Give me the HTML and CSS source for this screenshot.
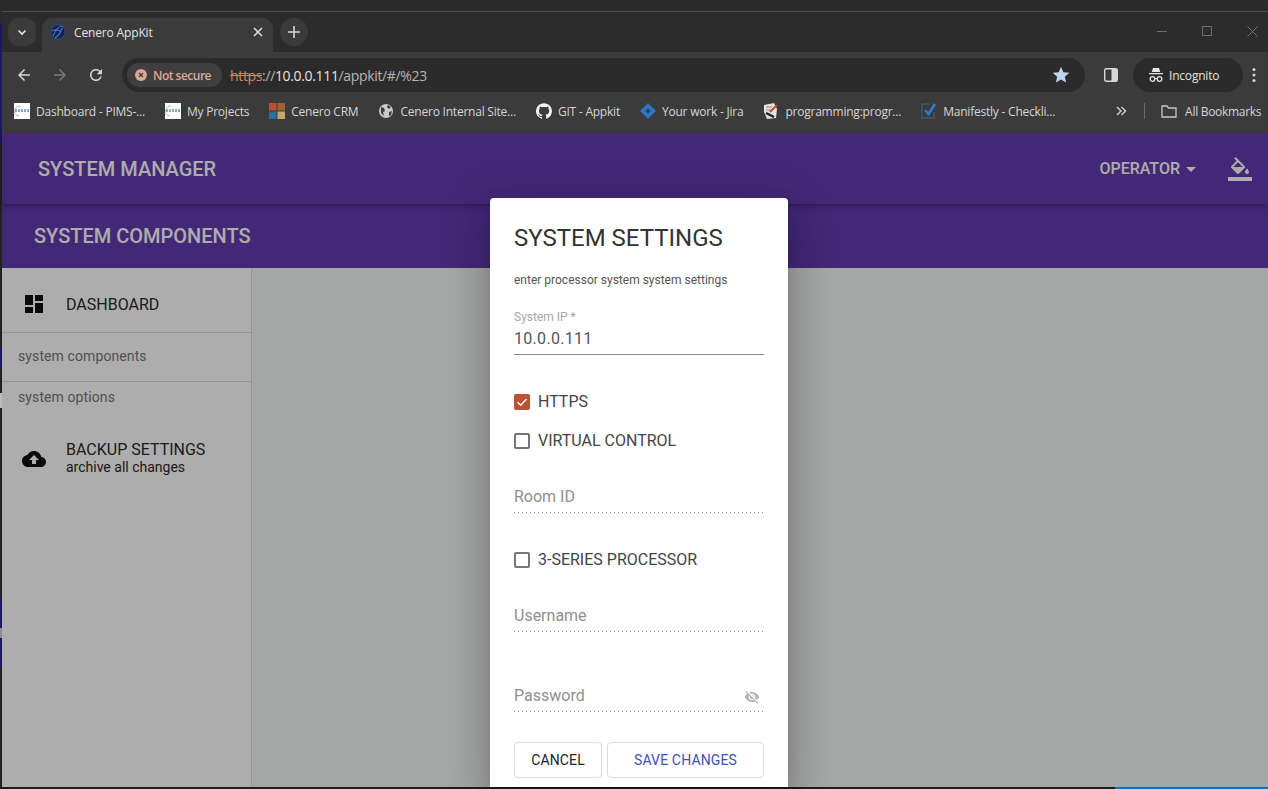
FILE: index.html
```html
<!DOCTYPE html>
<html>
<head>
  <title>Cenero AppKit</title>
  <link rel="stylesheet" href="styles.css">
</head>
<body>
  <div class="desk-top"></div>
  <div class="desk">
    <div class="edge"></div>
    <div class="window">

      <!-- tab strip -->
      <div class="tabstrip">
        <div class="round-btn list-btn">
          <svg viewBox="0 0 12 12" width="12" height="12"><path d="M2.5 4.5 6 8l3.5-3.5" fill="none" stroke="#e3e3e3" stroke-width="1.6"/></svg>
        </div>
        <div class="tab">
          <svg class="tab-icon" viewBox="0 0 16 16" width="16" height="16">
            <circle cx="8" cy="8" r="7.2" fill="#14224a" stroke="#2c4c9c" stroke-width="1"/>
            <path d="M3 12C6 5 10 2 13 2M5 14c3-2 6-6 7-10M2 7c3-2 7-1 9 1" fill="none" stroke="#4d74c8" stroke-width="1.2"/>
          </svg>
          <span class="tab-title">Cenero AppKit</span>
          <svg viewBox="0 0 10 10" width="10" height="10"><path d="M1 1l8 8M9 1 1 9" stroke="#e3e3e3" stroke-width="1.5"/></svg>
        </div>
        <div class="round-btn plus-btn">
          <svg viewBox="0 0 12 12" width="12" height="12"><path d="M6 0v12M0 6h12" stroke="#d8d8d8" stroke-width="1.6"/></svg>
        </div>
        <div class="win-controls">
          <svg viewBox="0 0 10 10" width="10" height="10"><path d="M0 5.5h10" stroke="#6f6f6f"/></svg>
          <svg viewBox="0 0 10 10" width="10" height="10"><path d="M.5.5h9v9h-9z" fill="none" stroke="#6f6f6f"/></svg>
          <svg viewBox="0 0 11 11" width="11" height="11"><path d="M.5.5l10 10M10.5.5l-10 10" stroke="#6f6f6f"/></svg>
        </div>
      </div>

      <!-- address bar -->
      <div class="toolbar">
        <svg class="nav-icon" viewBox="0 0 24 24" width="18" height="18"><path fill="#d6d6d6" d="M20 11H7.83l5.59-5.59L12 4l-8 8 8 8 1.41-1.41L7.83 13H20v-2z"/></svg>
        <svg class="nav-icon" viewBox="0 0 24 24" width="18" height="18"><path fill="#7b7b7b" d="M4 11h12.17l-5.59-5.59L12 4l8 8-8 8-1.41-1.41L16.17 13H4v-2z"/></svg>
        <svg class="nav-icon" viewBox="0 0 24 24" width="18" height="18"><path fill="#d6d6d6" d="M17.65 6.35C16.2 4.9 14.21 4 12 4c-4.42 0-7.99 3.58-7.99 8s3.57 8 7.99 8c3.73 0 6.84-2.55 7.73-6h-2.08c-.82 2.33-3.04 4-5.65 4-3.31 0-6-2.69-6-6s2.69-6 6-6c1.66 0 3.14.69 4.22 1.78L13 11h7V4l-2.35 2.35z"/></svg>
        <div class="omnibox">
          <div class="not-secure">
            <svg viewBox="0 0 12 12" width="12" height="12"><circle cx="6" cy="6" r="6" fill="#d9a796"/><path d="M4 4l4 4M8 4 4 8" stroke="#4a3a34" stroke-width="1.2"/></svg>
            <span>Not secure</span>
          </div>
          <div class="url"><s class="url-scheme">https</s><span class="url-dim">://</span>10.0.0.111<span class="url-dim">/appkit/#/%23</span></div>
          <svg class="star" viewBox="0 0 24 24" width="20" height="20"><path fill="#c2d3f2" d="M12 17.27L18.18 21l-1.64-7.03L22 9.24l-7.19-.61L12 2 9.19 8.63 2 9.24l5.46 4.73L5.82 21z"/></svg>
        </div>
        <svg class="panel-icon" viewBox="0 0 14 14" width="14" height="14"><rect x=".7" y=".7" width="12.6" height="12.6" rx="1.5" fill="none" stroke="#d8d8d8" stroke-width="1.4"/><rect x="7.5" y="1" width="5.5" height="12" fill="#d8d8d8"/></svg>
        <div class="incognito">
          <svg viewBox="0 0 16 16" width="16" height="16">
            <path fill="#e3e3e3" d="M5 1h6l1.3 4H3.7zM1 6h14v1.3H1z"/>
            <circle cx="4.5" cy="12" r="2.3" fill="none" stroke="#e3e3e3" stroke-width="1.3"/>
            <circle cx="11.5" cy="12" r="2.3" fill="none" stroke="#e3e3e3" stroke-width="1.3"/>
            <path d="M6.8 11.5h2.4" stroke="#e3e3e3"/>
          </svg>
          <span>Incognito</span>
        </div>
        <svg class="menu-dots" viewBox="0 0 4 16" width="4" height="16"><circle cx="2" cy="2.5" r="1.5" fill="#d8d8d8"/><circle cx="2" cy="8" r="1.5" fill="#d8d8d8"/><circle cx="2" cy="13.5" r="1.5" fill="#d8d8d8"/></svg>
      </div>

      <!-- bookmarks -->
      <div class="bookmarks">
        <a class="bm">
          <svg viewBox="0 0 16 16" width="16" height="16"><rect width="16" height="16" fill="#fff"/><path d="M1 7.5h14" stroke="#8aa8d0" stroke-width="3" stroke-dasharray="2 1"/><path d="M5 13a5 5 0 0 1 1-10" fill="none" stroke="#b5b5a8"/></svg>
          <span>Dashboard - PIMS-...</span>
        </a>
        <a class="bm">
          <svg viewBox="0 0 16 16" width="16" height="16"><rect width="16" height="16" fill="#fff"/><path d="M1 7.5h14" stroke="#8aa8d0" stroke-width="3" stroke-dasharray="2 1"/><path d="M5 13a5 5 0 0 1 1-10" fill="none" stroke="#b5b5a8"/></svg>
          <span>My Projects</span>
        </a>
        <a class="bm">
          <svg viewBox="0 0 16 16" width="16" height="16"><rect width="7.5" height="7.5" fill="#b94f32"/><rect x="8.5" width="7.5" height="7.5" fill="#a0622e"/><rect y="8.5" width="7.5" height="7.5" fill="#2a6ea8"/><rect x="8.5" y="8.5" width="7.5" height="7.5" fill="#c9a66b"/></svg>
          <span>Cenero CRM</span>
        </a>
        <a class="bm">
          <svg viewBox="0 0 16 16" width="16" height="16"><circle cx="8" cy="8" r="7" fill="#c9c9c9"/><path d="M3 4l3 1 1 3-2 1 1 4-3-3zM10 2l3 2-2 2-2-2zM11 9l3-1-1 4-2 1z" fill="#3b3b3b"/></svg>
          <span>Cenero Internal Site...</span>
        </a>
        <a class="bm">
          <svg viewBox="0 0 24 24" width="16" height="16"><path fill="#f2f2f2" d="M12 .3a12 12 0 0 0-3.8 23.4c.6.1.8-.3.8-.6v-2.2c-3.3.7-4-1.4-4-1.4-.6-1.4-1.4-1.8-1.4-1.8-1-.7.1-.7.1-.7 1.2.1 1.9 1.2 1.9 1.2 1 1.8 2.8 1.3 3.5 1 .1-.8.4-1.3.8-1.6-2.7-.3-5.5-1.3-5.5-6 0-1.2.5-2.3 1.3-3.1-.2-.4-.6-1.6 0-3.2 0 0 1-.3 3.4 1.2a11.5 11.5 0 0 1 6 0c2.3-1.5 3.3-1.2 3.3-1.2.7 1.6.3 2.8.1 3.2.8.8 1.3 1.9 1.3 3.1 0 4.6-2.8 5.6-5.5 5.9.5.4.9 1.1.9 2.2v3.3c0 .3.2.7.8.6A12 12 0 0 0 12 .3z"/></svg>
          <span>GIT - Appkit</span>
        </a>
        <a class="bm">
          <svg viewBox="0 0 16 16" width="16" height="16"><path fill="#2f76c4" d="M8 0l8 8-8 8-8-8z"/><path fill="#3b3b3b" d="M8 5.5 10.5 8 8 10.5 5.5 8z"/></svg>
          <span>Your work - Jira</span>
        </a>
        <a class="bm">
          <svg viewBox="0 0 16 16" width="16" height="16"><path fill="#e4e2dc" d="M1 2l10-2 3 6-1 9-9 1-3-7z"/><path d="M3 4h6M3 7h5" stroke="#8a8a86"/><path d="M7 9l7-7" stroke="#c0492c" stroke-width="2"/><path d="M3 10l8 4" stroke="#222" stroke-width="2.5"/></svg>
          <span>programming:progr...</span>
        </a>
        <a class="bm">
          <svg viewBox="0 0 16 16" width="16" height="16"><path d="M8 1H1v14h12V9" fill="none" stroke="#4f5560" stroke-width="1.5"/><path d="M4 7l3.5 4L14 1" fill="none" stroke="#2b7bd0" stroke-width="2.6"/></svg>
          <span>Manifestly - Checkli...</span>
        </a>
        <svg class="bm-more" viewBox="0 0 12 12" width="12" height="12"><path d="M2 2l4 4-4 4M6.5 2l4 4-4 4" fill="none" stroke="#d0d0d0" stroke-width="1.4"/></svg>
        <div class="bm-sep"></div>
        <a class="bm bm-all">
          <svg viewBox="0 0 16 16" width="16" height="16"><path d="M1 3h5l1.5 2H15v9H1z" fill="none" stroke="#c8c8c8" stroke-width="1.3"/></svg>
          <span>All Bookmarks</span>
        </a>
      </div>

      <!-- app -->
      <div class="app">
        <header class="app-bar">
          <div class="app-title">SYSTEM MANAGER</div>
          <div class="role">OPERATOR<i class="caret"></i></div>
          <svg class="fill-icon" viewBox="0 0 24 24" width="24" height="26"><path fill="#fff" d="M16.56 8.94L7.62 0 6.21 1.41l2.38 2.38-5.15 5.15c-.59.59-.59 1.54 0 2.12l5.5 5.5c.29.29.68.44 1.06.44s.77-.15 1.06-.44l5.5-5.5c.59-.58.59-1.53 0-2.12zM5.21 10L10 5.21 14.79 10H5.21zM19 11.5s-2 2.17-2 3.5c0 1.1.9 2 2 2s2-.9 2-2c0-1.33-2-3.5-2-3.5zM0 20h24v4H0z"/></svg>
        </header>
        <div class="sub-bar">SYSTEM COMPONENTS</div>
        <div class="app-body">
          <nav class="sidebar">
            <div class="nav-main">
              <svg viewBox="0 0 24 24" width="24" height="24"><path fill="#111" d="M3 13h8V3H3v10zm0 8h8v-6H3v6zm10 0h8V11h-8v10zm0-18v6h8V3h-8z"/></svg>
              <span>DASHBOARD</span>
            </div>
            <div class="nav-sub nav-sub-first">system components</div>
            <div class="nav-sub">system options</div>
            <div class="nav-main nav-backup">
              <svg viewBox="0 0 24 24" width="24" height="24"><path fill="#111" d="M19.35 10.04C18.67 6.59 15.64 4 12 4 9.11 4 6.6 5.64 5.35 8.04 2.34 8.36 0 10.91 0 14c0 3.31 2.69 6 6 6h13c2.76 0 5-2.24 5-5 0-2.64-2.05-4.78-4.65-4.96zM14 13v4h-4v-4H7l5-5 5 5h-3z"/></svg>
              <div>
                <div>BACKUP SETTINGS</div>
                <div class="nav-note">archive all changes</div>
              </div>
            </div>
          </nav>
          <main class="content"></main>
        </div>
        <div class="backdrop"></div>
      </div>

      <!-- dialog -->
      <div class="dialog">
        <h2>SYSTEM SETTINGS</h2>
        <p class="dialog-sub">enter processor system system settings</p>
        <div class="field-ip">
          <label>System IP *</label>
          <div class="field-value">10.0.0.111</div>
        </div>
        <div class="check check-https"><i class="box box-on"><svg viewBox="0 0 16 16" width="16" height="16"><path d="M3.5 8.2 6.7 11.2 12.5 5" fill="none" stroke="#fff" stroke-width="1.5"/></svg></i>HTTPS</div>
        <div class="check check-virtual"><i class="box"></i>VIRTUAL CONTROL</div>
        <div class="field-empty room">Room ID</div>
        <div class="check check-series"><i class="box"></i>3-SERIES PROCESSOR</div>
        <div class="field-empty user">Username</div>
        <div class="field-empty pass">Password
          <svg viewBox="0 0 24 24" width="16" height="16"><path fill="#b4b4b4" d="M12 7c2.76 0 5 2.24 5 5 0 .65-.13 1.26-.36 1.83l2.92 2.92c1.51-1.26 2.7-2.89 3.43-4.75-1.73-4.39-6-7.5-11-7.5-1.4 0-2.74.25-3.98.7l2.16 2.16C10.74 7.13 11.35 7 12 7zM2 4.27l2.28 2.28.46.46C3.08 8.3 1.78 10.02 1 12c1.73 4.39 6 7.5 11 7.5 1.55 0 3.03-.3 4.38-.84l.42.42L19.73 22 21 20.73 3.27 3 2 4.27zM7.53 9.8l1.55 1.55c-.05.21-.08.43-.08.65 0 1.66 1.34 3 3 3 .22 0 .44-.03.65-.08l1.55 1.55c-.67.33-1.41.53-2.2.53-2.76 0-5-2.24-5-5 0-.79.2-1.53.53-2.2zm4.31-.78l3.15 3.15.02-.16c0-1.66-1.34-3-3-3l-.17.01z"/></svg>
        </div>
        <div class="dialog-actions">
          <button class="btn-cancel">CANCEL</button>
          <button class="btn-save">SAVE CHANGES</button>
        </div>
      </div>

    </div>
  </div>
  <div class="desk-bottom"><i></i></div>
</body>
</html>
```

FILE: styles.css
```css
* { box-sizing: border-box; }

html, body {
  margin: 0;
  height: 789px;
  overflow: hidden;
}
body {
  display: flex;
  flex-direction: column;
  background: #1d1d1d;
  font-family: Roboto, sans-serif;
}
svg { display: block; flex: none; }

.desk-top {
  height: 11px;
  background: #2b2b2b;
}
.desk {
  flex: 1;
  display: flex;
  min-height: 0;
}
.edge {
  width: 2px;
  background: linear-gradient(#2b2b2b 12px, #1c1a5e 12px, #1c1a5e 133px, #222 133px, #222 336px, #1c1a5e 336px, #1c1a5e 357px, #222 357px, #222 382px, #bbb 382px, #bbb 397px, #222 397px, #222 587px, #1c1a5e 587px, #1c1a5e 617px, #8d8a90 617px, #8d8a90 627px, #1c1a5e 627px, #1c1a5e 656px, #222 656px);
}
.window {
  position: relative;
  flex: 1;
  display: flex;
  flex-direction: column;
  min-width: 0;
  border-top: 1px solid #4a4a4a;
}
.desk-bottom {
  height: 2px;
  background: #1d1d1d;
  display: flex;
  justify-content: flex-end;
}
.desk-bottom i {
  width: 153px;
  background: #1b6fb5;
}

/* browser chrome */
.tabstrip {
  height: 40px;
  background: #2c2c2c;
  display: flex;
  align-items: flex-start;
  padding: 6px 0 0 6px;
  font-family: "Open Sans", sans-serif;
}
.round-btn {
  width: 28px;
  height: 28px;
  border-radius: 50%;
  background: #3b3b3b;
  display: flex;
  align-items: center;
  justify-content: center;
}
.list-btn { border-radius: 10px; }
.tab {
  width: 231px;
  height: 34px;
  margin-left: 6px;
  padding: 0 10px 6px 8px;
  background: #3b3b3b;
  border-radius: 10px 10px 0 0;
  display: flex;
  align-items: center;
  color: #e3e3e3;
  font-size: 12px;
}
.tab-icon { margin-right: 8px; }
.tab-title {
  flex: 1;
  letter-spacing: -.15px;
}
.plus-btn { margin-left: 7px; }
.win-controls {
  margin-left: auto;
  display: flex;
  align-items: center;
  gap: 35px;
  height: 26px;
  padding-right: 10px;
}

.toolbar {
  height: 40px;
  background: #3b3b3b;
  display: flex;
  align-items: center;
  padding: 6px 0 0 13px;
}
.nav-icon { margin-right: 18px; }
.omnibox {
  width: 963px;
  height: 34px;
  margin-left: -1px;
  padding: 0 14px 0 5px;
  background: #2b2b2b;
  border-radius: 17px;
  display: flex;
  align-items: center;
  font-family: "Open Sans", sans-serif;
}
.not-secure {
  width: 95px;
  height: 24px;
  padding-left: 8px;
  background: #3f3f3f;
  border-radius: 12px;
  display: flex;
  align-items: center;
  gap: 6px;
  color: #dda895;
  font-size: 12px;
  font-weight: 600;
}
.not-secure span { letter-spacing: -.5px; }
.url {
  flex: 1;
  margin-left: 8px;
  color: #e3e3e3;
  font-size: 14px;
  letter-spacing: -.35px;
}
.url-scheme { color: #d9806a; }
.url-dim { color: #b5b5b5; }
.panel-icon { margin-left: 19px; }
.incognito {
  width: 110px;
  height: 34px;
  margin-left: 15px;
  padding-left: 15px;
  background: #2b2b2b;
  border-radius: 17px;
  display: flex;
  align-items: center;
  gap: 5px;
  color: #e3e3e3;
  font-family: "Open Sans", sans-serif;
  font-size: 12px;
  letter-spacing: -.2px;
}
.menu-dots { margin-left: 9px; }

.bookmarks {
  height: 41px;
  background: #3b3b3b;
  display: flex;
  align-items: center;
  gap: 20px;
  padding: 0 0 3px 12px;
  font-family: "Open Sans", sans-serif;
  font-size: 12px;
  color: #d6d6d6;
  white-space: nowrap;
}
.bm {
  display: flex;
  align-items: center;
  gap: 6px;
  letter-spacing: -.22px;
}
.bm-more { margin-left: 40px; }
.bm-sep {
  width: 1px;
  height: 16px;
  margin-left: -3px;
  background: #6a6a6a;
}
.bm-all {
  margin-left: -4px;
  gap: 8px;
  letter-spacing: -.3px;
}

/* app under the dialog */
.app {
  position: relative;
  flex: 1;
  display: flex;
  flex-direction: column;
  min-height: 0;
}
.app-bar {
  position: relative;
  z-index: 1;
  height: 71px;
  padding: 0 16px 0 36px;
  background: #633bb0;
  box-shadow: 0 2px 6px rgba(0, 0, 0, .35);
  display: flex;
  align-items: center;
  color: #fff;
}
.app-title {
  flex: 1;
  font-size: 20px;
  font-weight: 500;
}
.role {
  display: flex;
  align-items: center;
  font-size: 16px;
  font-weight: 500;
}
.caret {
  margin: 2px 0 0 6px;
  border: 5px solid transparent;
  border-top-color: #fff;
  border-bottom: 0;
}
.fill-icon { margin-left: 32px; }
.sub-bar {
  height: 64px;
  padding: 0 0 0 32px;
  background: #633bb0;
  color: #fff;
  font-size: 20px;
  font-weight: 500;
  line-height: 64px;
}
.app-body {
  flex: 1;
  display: flex;
  min-height: 0;
}
.sidebar {
  width: 250px;
  background: #fff;
  border-right: 1px solid #dcdcdc;
  color: #2a2a2a;
}
.nav-main {
  height: 65px;
  display: flex;
  align-items: center;
  gap: 20px;
  padding: 8px 0 0 20px;
  border-bottom: 1px solid #dcdcdc;
  font-size: 16px;
}
.nav-sub {
  height: 49px;
  padding: 15px 0 0 16px;
  color: #777;
  font-size: 14px;
  letter-spacing: .1px;
}
.nav-sub-first {
  border-bottom: 1px solid #dcdcdc;
}
.nav-sub + .nav-sub {
  height: 44px;
  padding-top: 7px;
}
.nav-backup {
  height: 60px;
  border-bottom: 0;
  line-height: 18px;
  padding-top: 5px;
}
.nav-note {
  font-size: 14px;
  line-height: 17px;
}
.content {
  flex: 1;
  background: #f3f5f5;
}
.backdrop {
  position: absolute;
  inset: 0;
  z-index: 2;
  background: rgba(0, 0, 0, .32);
}

/* dialog */
.dialog {
  position: absolute;
  z-index: 3;
  top: 186px;
  left: 488px;
  width: 298px;
  height: 589px;
  padding: 24px 24px 0;
  background: #fff;
  border-radius: 4px 4px 0 0;
  box-shadow: 0 11px 15px -7px rgba(0, 0, 0, .2), 0 24px 38px 3px rgba(0, 0, 0, .14), 0 9px 46px 8px rgba(0, 0, 0, .12);
  color: #333;
}
.dialog h2 {
  margin: 0;
  font-size: 24px;
  font-weight: 400;
  line-height: 32px;
  color: #333;
}
.dialog-sub {
  margin: 18px 0 0;
  font-size: 12px;
  line-height: 16px;
  color: #555;
}
.field-ip {
  margin-top: 21px;
  height: 46px;
  border-bottom: 1px solid #888;
}
.field-ip label {
  display: block;
  font-size: 12px;
  line-height: 16px;
  color: #a6a6a6;
}
.field-value {
  margin-top: 4px;
  font-size: 16px;
  line-height: 20px;
  letter-spacing: .3px;
  color: #555;
}
.check {
  height: 20px;
  display: flex;
  align-items: flex-start;
  gap: 8px;
  font-size: 16px;
  line-height: 19px;
  color: #444;
}
.check-https { margin-top: 37px; }
.check-virtual { margin-top: 19px; }
.check-series { margin-top: 37px; }
.box {
  width: 16px;
  height: 16px;
  margin-top: 2px;
  border: 2px solid #757575;
  border-radius: 2px;
}
.box-on {
  border: 0;
  background: #bf5032;
}
.field-empty {
  height: 36px;
  padding-top: 10px;
  background: repeating-linear-gradient(90deg, #8c8c8c 0 1px, transparent 1px 4px) left bottom / 100% 1px no-repeat;
  font-size: 16px;
  line-height: 20px;
  color: #8f8f8f;
}
.room { margin-top: 26px; }
.user { margin-top: 26px; }
.pass {
  margin-top: 44px;
  display: flex;
  justify-content: space-between;
}
.pass svg { margin: 3px 4px 0 0; }
.dialog-actions {
  margin-top: 30px;
  display: flex;
  gap: 5px;
}
.dialog-actions button {
  height: 36px;
  background: #fff;
  border: 1px solid #dcdcdc;
  border-radius: 4px;
  font-family: Roboto, sans-serif;
  font-size: 14px;
  font-weight: 400;
  letter-spacing: .15px;
}
.btn-cancel {
  width: 88px;
  color: #222;
}
.btn-save {
  width: 157px;
  color: #3f51b5;
}
```
